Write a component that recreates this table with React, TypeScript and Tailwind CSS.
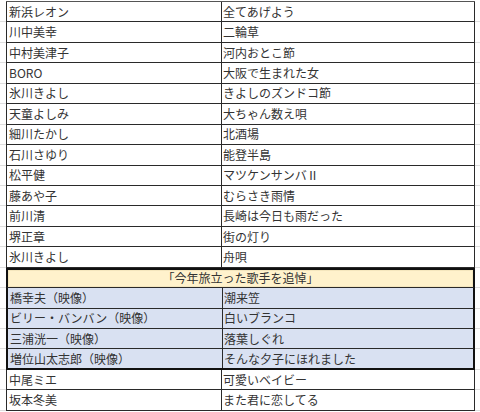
import React from "react";

const top: [string, string][] = [
  ["新浜レオン", "全てあげよう"],
  ["川中美幸", "二輪草"],
  ["中村美津子", "河内おとこ節"],
  ["BORO", "大阪で生まれた女"],
  ["氷川きよし", "きよしのズンドコ節"],
  ["天童よしみ", "大ちゃん数え唄"],
  ["細川たかし", "北酒場"],
  ["石川さゆり", "能登半島"],
  ["松平健", "マツケンサンバⅡ"],
  ["藤あや子", "むらさき雨情"],
  ["前川清", "長崎は今日も雨だった"],
  ["堺正章", "街の灯り"],
  ["氷川きよし", "舟唄"],
];

const tribute: [string, string][] = [
  ["橋幸夫（映像）", "潮来笠"],
  ["ビリー・バンバン（映像）", "白いブランコ"],
  ["三浦洸一（映像）", "落葉しぐれ"],
  ["増位山太志郎（映像）", "そんな夕子にほれました"],
];

const bottom: [string, string][] = [
  ["中尾ミエ", "可愛いベイビー"],
  ["坂本冬美", "また君に恋してる"],
];

function Row({ a, b, blue, last }: { a: string; b: string; blue?: boolean; last?: boolean }) {
  return (
    <div className="flex h-[20.45px]">
      <div className="w-[6px] border-b border-[#dedede]" />
      <div
        className={`flex w-[469px] border-l border-r border-[#2a2a2a] ${
          last ? "border-b-2 border-b-[#111]" : "border-b border-b-[#2a2a2a]"
        } ${blue ? "bg-[#d9e1f2] border-l-2 border-r-2 border-l-[#111] border-r-[#111]" : "bg-white"}`}
      >
        <div className="flex w-[215px] items-center border-r border-[#2a2a2a] pl-[2px] whitespace-nowrap">
          {a}
        </div>
        <div className="flex flex-1 items-center pl-[1px] whitespace-nowrap">{b}</div>
      </div>
      <div className="flex-1 border-b border-[#dedede]" />
    </div>
  );
}

export default function App() {
  return (
    <div className="h-[412px] w-[480px] overflow-hidden bg-white font-['Noto_Sans_CJK_JP',sans-serif] text-[12px] leading-none text-[#333]">
      <div className="flex h-[2px]">
        <div className="w-[6px]" />
        <div className="mt-[1px] w-[469px] border-t border-[#555]" />
        <div className="flex-1" />
      </div>
      {top.map(([a, b], i) => (
        <Row key={"t" + i} a={a} b={b} />
      ))}
      <div className="flex h-[20.45px]">
        <div className="w-[6px] border-b border-[#dedede]" />
        <div className="flex w-[469px] items-center justify-center border-2 border-b border-[#111] border-b-[#2a2a2a] bg-[#fff2cc] shadow-[inset_0_0_0_1px_#f4e6bd]">
          「今年旅立った歌手を追悼」
        </div>
        <div className="flex-1 border-b border-[#dedede]" />
      </div>
      {tribute.map(([a, b], i) => (
        <Row key={"m" + i} a={a} b={b} blue last={i === tribute.length - 1} />
      ))}
      {bottom.map(([a, b], i) => (
        <Row key={"b" + i} a={a} b={b} />
      ))}
    </div>
  );
}
